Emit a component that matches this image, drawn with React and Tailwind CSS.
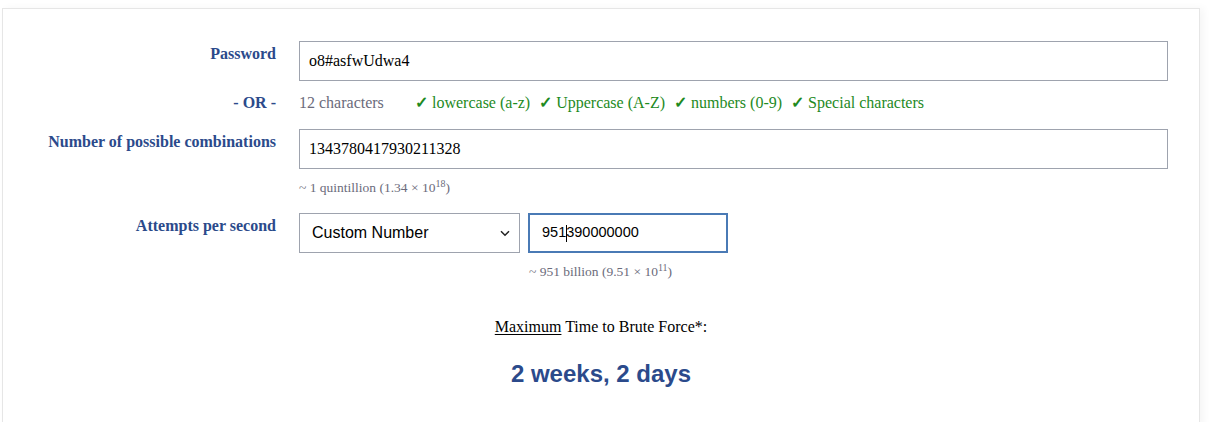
import React from "react";

const serif = { fontFamily: '"Liberation Serif", "Times New Roman", serif' };

function Label({ children }) {
  return (
    <div className="text-right text-[16px] leading-[24px] font-bold text-[#2b4a8b] pt-px">
      {children}
    </div>
  );
}

function Check({ children }) {
  return (
    <span className="text-[#1e8a1e] mr-[9px]">
      <span className="font-bold">✓</span> {children}
    </span>
  );
}

export default function App() {
  return (
    <div className="min-h-screen bg-white pl-[2px] pt-[8px]" style={serif}>
      <div className="w-[1198px] h-[420px] bg-white border border-[#e6e6e6] shadow-[4px_0_8px_rgba(0,0,0,0.04)] pt-[32px] pr-[31px]">
        <div className="grid grid-cols-[273px_1fr] gap-x-[23px]">
          {/* Password */}
          <Label>Password</Label>
          <div className="h-[40px] border border-[#9ea3ae] flex items-center pl-[9px] text-[16px] text-black">
            o8#asfwUdwa4
          </div>

          {/* OR */}
          <div className="text-right text-[16px] leading-[24px] font-bold text-[#2b4a8b] mt-[10px]">
            - OR -
          </div>
          <div className="mt-[10px] text-[16px] leading-[24px] flex">
            <span className="text-[#6b6b7b] w-[116px]">12 characters</span>
            <Check>lowercase (a-z)</Check>
            <Check>Uppercase (A-Z)</Check>
            <Check>numbers (0-9)</Check>
            <Check>Special characters</Check>
          </div>

          {/* Combinations */}
          <div className="mt-[14px]">
            <Label>Number of possible combinations</Label>
          </div>
          <div className="mt-[14px]">
            <div className="h-[40px] border border-[#9ea3ae] flex items-center pl-[9px] text-[16px] text-black">
              1343780417930211328
            </div>
            <div className="text-[13.5px] leading-[18px] text-[#6b6b7b] mt-[10px]">
              ~ 1 quintillion (1.34 × 10<sup className="text-[10px]">18</sup>)
            </div>
          </div>

          {/* Attempts */}
          <div className="mt-[16px]">
            <Label>Attempts per second</Label>
          </div>
          <div className="mt-[16px] flex gap-[8px]">
            <div>
              <div className="relative w-[221px] h-[40px] border border-[#9ea3ae] flex items-center pl-[12px] text-[16px] text-black" style={{ fontFamily: '"Liberation Sans", Arial, sans-serif' }}>
                Custom Number
                <svg className="absolute right-[9px] top-[16px]" width="10" height="7" viewBox="0 0 10 7">
                  <path d="M1 1.2 L5 5.2 L9 1.2" fill="none" stroke="#222" strokeWidth="1.5" />
                </svg>
              </div>
            </div>
            <div>
              <div className="w-[200px] h-[40px] border-2 border-[#4a7ab5] flex items-center pl-[12px] text-[14.5px] text-black" style={{ fontFamily: '"Liberation Sans", Arial, sans-serif' }}>
                951<span className="inline-block w-px h-[17px] bg-black -mr-px"></span>390000000
              </div>
              <div className="text-[13.5px] leading-[18px] text-[#6b6b7b] mt-[10px] pl-px">
                ~ 951 billion (9.51 × 10<sup className="text-[10px]">11</sup>)
              </div>
            </div>
          </div>
        </div>

        {/* Result */}
        <div className="pl-[31px] text-center mt-[35px]">
          <div className="text-[16px] leading-[22px] text-black">
            <span className="underline underline-offset-2">Maximum</span> Time to Brute Force*:
          </div>
          <div className="mt-[21px] text-[24px] leading-[30px] font-bold text-[#2b4a8b]" style={{ fontFamily: '"Liberation Sans", Arial, sans-serif' }}>
            2 weeks, 2 days
          </div>
        </div>
      </div>
    </div>
  );
}
